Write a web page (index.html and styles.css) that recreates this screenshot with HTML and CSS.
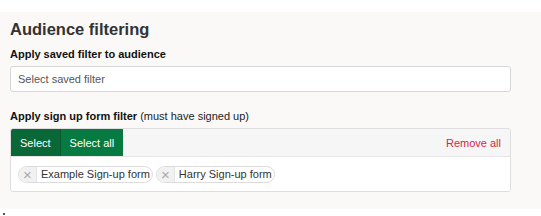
FILE: index.html
```html
<!DOCTYPE html>
<html lang="en">

<head>
    <meta charset="UTF-8">
    <meta name="viewport" content="width=device-width, initial-scale=1.0">
    <title>Audience filtering</title>
    <link rel="stylesheet" href="styles.css">
</head>

<body>
    <div class="panel">
        <h2>Audience filtering</h2>

        <div class="label">Apply saved filter to audience</div>
        <div class="select_box">Select saved filter</div>

        <div class="label label2">Apply sign up form filter <span class="hint">(must have signed up)</span></div>
        <div class="picker">
            <div class="picker_head">
                <button class="btn btn_active">Select</button>
                <button class="btn">Select all</button>
                <a class="remove_all">Remove all</a>
            </div>
            <div class="picker_body">
                <span class="tag"><span class="tag_x">&times;</span><span class="tag_text">Example Sign-up form</span></span>
                <span class="tag"><span class="tag_x">&times;</span><span class="tag_text">Harry Sign-up form</span></span>
            </div>
        </div>
    </div>
    <div class="dot"></div>
</body>

</html>
```

FILE: styles.css
```css
body {
    margin: 0;
    background: #fff;
    font-family: "Liberation Sans", Arial, sans-serif;
    font-size: 11px;
    color: #222;
}

.panel {
    margin-top: 12px;
    background: #faf9f8;
    padding: 7px 30px 17px 10px;
}

h2 {
    margin: 0;
    font-size: 16.5px;
    line-height: 20px;
    color: #333;
}

.label {
    margin-top: 8px;
    font-weight: bold;
    line-height: 14px;
    color: #111;
}

.label2 {
    margin-top: 17px;
}

.hint {
    font-weight: normal;
    color: #222;
}

.select_box {
    margin-top: 5px;
    height: 24px;
    line-height: 24px;
    padding-left: 7px;
    background: #fff;
    border: 1px solid #d6d6d6;
    border-radius: 3px;
    color: #555;
}

.picker {
    margin-top: 5px;
    border: 1px solid #dedede;
    border-radius: 3px;
    overflow: hidden;
}

.picker_head {
    display: flex;
    align-items: center;
    height: 27px;
    background: #f6f6f6;
    border-bottom: 1px solid #e6e6e6;
}

.btn {
    height: 27px;
    padding: 0 9px;
    border: none;
    background: #067a40;
    color: #fff;
    font-family: inherit;
    font-size: 11px;
}

.btn_active {
    background: #0a6838;
    border-right: 1px solid #075a30;
}

.remove_all {
    margin-left: auto;
    margin-right: 9px;
    color: #d92449;
}

.picker_body {
    background: #fff;
    padding: 9px 7px 8px;
    display: flex;
    gap: 3px;
}

.tag {
    display: inline-flex;
    height: 15px;
    line-height: 15px;
    border: 1px solid #dcdcdc;
    border-radius: 9px;
    overflow: hidden;
    color: #333;
}

.tag_x {
    width: 17px;
    text-align: center;
    background: #f1f1f1;
    border-right: 1px solid #e4e4e4;
    color: #aaa;
    font-size: 15px;
}

.tag_text {
    padding: 0 2px 0 4px;
}

.dot {
    width: 2px;
    height: 2px;
    margin: 4px 0 0 3px;
    background: #555;
}
```
